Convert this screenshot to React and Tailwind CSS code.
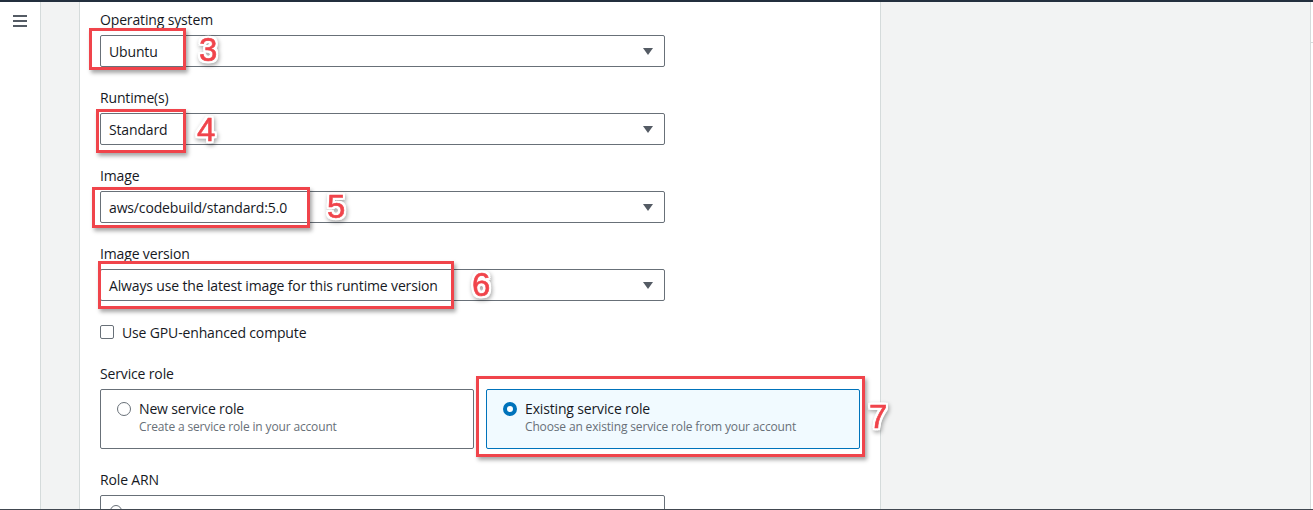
import React from "react";

const font = { fontFamily: '"Open Sans", "Noto Sans", Arial, sans-serif', letterSpacing: "-0.15px" };

function Caret() {
  return (
    <svg width="10" height="7" viewBox="0 0 10 7" className="shrink-0">
      <path d="M0 0 H10 L5 7 Z" fill="#545b64" />
    </svg>
  );
}

function Select({ value }) {
  return (
    <div className="flex h-[32px] w-[565px] items-center justify-between rounded-[2px] border border-[#687078] bg-white pl-[8px] pr-[11px] text-[14px] text-[#16191f]">
      <span>{value}</span>
      <Caret />
    </div>
  );
}

function Field({ label, value, className = "" }) {
  return (
    <div className={className}>
      <div className="mb-[5px] h-[20px] text-[14px] leading-[20px] text-[#16191f]">{label}</div>
      <Select value={value} />
    </div>
  );
}

function Tile({ selected, title, desc }) {
  return (
    <div
      className={
        "flex h-[60px] flex-1 gap-[8px] rounded-[2px] border pl-[16px] pt-[9px] " +
        (selected ? "border-[#0073bb] bg-[#f1faff]" : "border-[#687078] bg-white")
      }
    >
      <div className="flex h-[20px] items-center">
        {selected ? (
          <span className="block h-[14px] w-[14px] rounded-full border-[4px] border-[#0073bb] bg-white" />
        ) : (
          <span className="block h-[14px] w-[14px] rounded-full border-[1.5px] border-[#687078] bg-white" />
        )}
      </div>
      <div>
        <div className="text-[14px] leading-[20px] text-[#16191f]">{title}</div>
        <div className="text-[12px] leading-[16px] text-[#687078]">{desc}</div>
      </div>
    </div>
  );
}

function RedBox({ className }) {
  return (
    <div
      className={
        "pointer-events-none absolute border-[3px] border-[#f0444b] shadow-[2px_3px_4px_rgba(0,0,0,0.35)] " +
        className
      }
    />
  );
}

function Num({ n, className }) {
  return (
    <div
      className={
        "pointer-events-none absolute text-[33px] leading-none text-[#f0444b] [-webkit-text-stroke:0.6px_#f0444b] [filter:drop-shadow(2px_0_0_white)_drop-shadow(-2px_0_0_white)_drop-shadow(0_2px_0_white)_drop-shadow(0_-2px_0_white)_drop-shadow(1px_2px_2px_rgba(0,0,0,0.35))] " +
        className
      }
      style={{ fontFamily: '"Liberation Sans", Arial, sans-serif', letterSpacing: 0 }}
    >
      {n}
    </div>
  );
}

export default function App() {
  return (
    <div
      className="relative flex h-[510px] w-[1313px] overflow-hidden border-t-[2px] border-b border-t-[#232f3e] border-b-[#414750] bg-white"
      style={font}
    >
      {/* left nav */}
      <div className="w-[41px] shrink-0 border-r border-[#d5dbdb] bg-white pl-[13px] pt-[13px]">
        <div className="flex w-[14px] flex-col gap-[3px]">
          <span className="block h-[2px] bg-[#545b64]" />
          <span className="block h-[2px] bg-[#545b64]" />
          <span className="block h-[2px] bg-[#545b64]" />
        </div>
      </div>
      {/* gray strip */}
      <div className="w-[39px] shrink-0 border-r border-[#d5dbdb] bg-[#f2f3f3]" />
      {/* content */}
      <div className="w-[801px] shrink-0 border-r border-[#d5dbdb] bg-white px-[20px] pt-[8px]">
        <Field label="Operating system" value="Ubuntu" />
        <Field className="mt-[21px]" label="Runtime(s)" value="Standard" />
        <Field className="mt-[21px]" label="Image" value="aws/codebuild/standard:5.0" />
        <Field className="mt-[21px]" label="Image version" value="Always use the latest image for this runtime version" />
        <div className="mt-[21px] flex h-[20px] items-center gap-[8px] text-[14px] text-[#16191f]">
          <span className="block h-[14px] w-[14px] rounded-[2px] border border-[#687078] bg-white" />
          <span>Use GPU-enhanced compute</span>
        </div>
        <div className="mt-[22px] mb-[5px] h-[20px] text-[14px] leading-[20px] text-[#16191f]">Service role</div>
        <div className="flex w-[760px] gap-[12px]">
          <Tile title="New service role" desc="Create a service role in your account" />
          <Tile selected title="Existing service role" desc="Choose an existing service role from your account" />
        </div>
        <div className="mt-[21px] mb-[5px] h-[20px] text-[14px] leading-[20px] text-[#16191f]">Role ARN</div>
        <div className="flex h-[32px] w-[565px] items-center rounded-[2px] border border-[#687078] bg-white pl-[9px]">
          <span className="block h-[12px] w-[12px] rounded-full border-[1.5px] border-[#687078]" />
        </div>
      </div>
      {/* right gray */}
      <div className="w-[430px] shrink-0 border-r border-[#d5dbdb] bg-[#f2f3f3]" />
      <div className="flex-1 bg-white pt-[40px]">
        <div className="h-px bg-[#d5dbdb]" />
      </div>

      {/* annotations */}
      <RedBox className="left-[89px] top-[26px] h-[42px] w-[97px]" />
      <Num n="3" className="left-[199px] top-[31px]" />
      <RedBox className="left-[96px] top-[107px] h-[44px] w-[90px]" />
      <Num n="4" className="left-[197px] top-[111px]" />
      <RedBox className="left-[92px] top-[185px] h-[41px] w-[218px]" />
      <Num n="5" className="left-[327px] top-[188px]" />
      <RedBox className="left-[98px] top-[259px] h-[48px] w-[356px]" />
      <Num n="6" className="left-[472px] top-[266px]" />
      <RedBox className="left-[476px] top-[374px] h-[81px] w-[389px]" />
      <Num n="7" className="left-[869px] top-[398px]" />
    </div>
  );
}
